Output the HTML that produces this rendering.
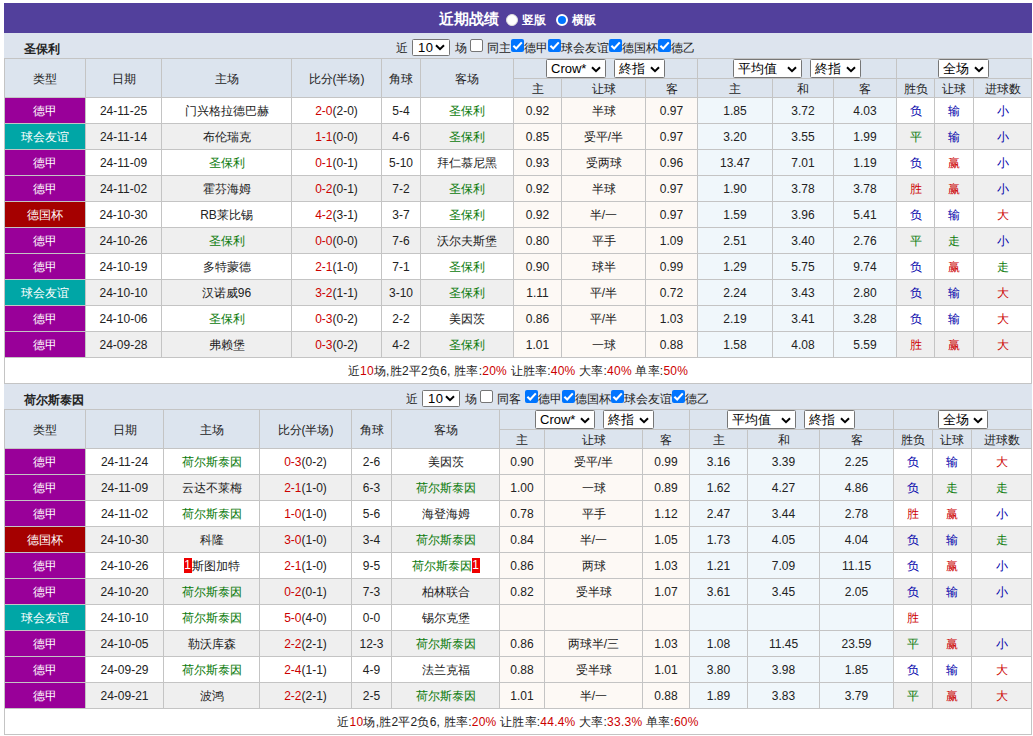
<!DOCTYPE html>
<html><head><meta charset="utf-8"><style>
html,body{margin:0;padding:0;background:#fff;}
body{width:1033px;height:736px;position:relative;overflow:hidden;font-family:"Liberation Sans",sans-serif;font-size:12px;color:#222;}
.c{position:absolute;box-sizing:border-box;text-align:center;white-space:nowrap;overflow:hidden;}
.t{position:absolute;height:25px;line-height:25px;white-space:nowrap;}
.tn{position:absolute;font-weight:bold;white-space:nowrap;}
.title{position:absolute;left:4px;top:3px;width:1028px;height:30px;background:#52409c;color:#fff;}
.tt{position:absolute;left:435px;top:1px;line-height:30px;font-size:15px;font-weight:bold;}
.rad{position:absolute;top:10.5px;width:12px;height:12px;border-radius:50%;box-sizing:border-box;}
.r1{left:501.5px;background:#fff;border:1px solid #ddd;}
.r2{left:552px;background:#0075ff;border:2px solid #fff;}
.rl{position:absolute;top:2px;line-height:31px;font-weight:bold;}
.sel{position:absolute;box-sizing:border-box;border:1px solid #767676;border-radius:1.5px;background:#fff;color:#000;font-size:13px;}
.sel .st{position:absolute;left:4px;top:0;line-height:17px;}
.sel .chev{position:absolute;right:4px;top:6px;}
.s10 .st{top:-1px;left:5px;letter-spacing:0.5px;}
.s10 .chev{top:4px;}
.cbc{position:absolute;width:13px;height:13px;box-sizing:border-box;background:#0075ff;border-radius:2px;}
.cbc svg{position:absolute;left:0;top:0;}
.cbu{position:absolute;width:13px;height:13px;box-sizing:border-box;background:#fff;border:1px solid #767676;border-radius:2px;}
.rc{display:inline-block;position:relative;top:-1px;background:#e00;color:#fff;width:8px;height:15px;line-height:15px;font-size:12px;font-weight:normal;vertical-align:middle;}
</style></head>
<body>
<div class="title"><span class="tt">近期战绩</span><span class="rad r1"></span><span class="rl" style="left:518px">竖版</span><span class="rad r2"></span><span class="rl" style="left:568px">横版</span></div>
<div class="c" style="left:4px;top:33px;width:1028px;height:25px;background:#dde4ee;"></div>
<div class="tn" style="left:24px;top:37px;height:25px;line-height:25px">圣保利</div>
<div class="c" style="left:4px;top:58px;width:82px;height:40px;border:1px solid #c4c4c4;line-height:40px;background:#dce4ee;padding-top:0px">类型</div>
<div class="c" style="left:85px;top:58px;width:77px;height:40px;border:1px solid #c4c4c4;line-height:40px;background:#dce4ee;padding-top:0px">日期</div>
<div class="c" style="left:161px;top:58px;width:131px;height:40px;border:1px solid #c4c4c4;line-height:40px;background:#dce4ee;padding-top:0px">主场</div>
<div class="c" style="left:291px;top:58px;width:91px;height:40px;border:1px solid #c4c4c4;line-height:40px;background:#dce4ee;padding-top:0px">比分(半场)</div>
<div class="c" style="left:381px;top:58px;width:40px;height:40px;border:1px solid #c4c4c4;line-height:40px;background:#dce4ee;padding-top:0px">角球</div>
<div class="c" style="left:420px;top:58px;width:94px;height:40px;border:1px solid #c4c4c4;line-height:40px;background:#dce4ee;padding-top:0px">客场</div>
<div class="c" style="left:513px;top:58px;width:185px;height:21px;border:1px solid #c4c4c4;line-height:21px;background:#dce4ee;"></div>
<div class="c" style="left:697px;top:58px;width:200px;height:21px;border:1px solid #c4c4c4;line-height:21px;background:#dce4ee;"></div>
<div class="c" style="left:896px;top:58px;width:136px;height:21px;border:1px solid #c4c4c4;line-height:21px;background:#dce4ee;"></div>
<div class="c" style="left:513px;top:78px;width:49px;height:20px;border:1px solid #c4c4c4;line-height:20px;background:#dce4ee;">主</div>
<div class="c" style="left:561px;top:78px;width:85px;height:20px;border:1px solid #c4c4c4;line-height:20px;background:#dce4ee;">让球</div>
<div class="c" style="left:645px;top:78px;width:53px;height:20px;border:1px solid #c4c4c4;line-height:20px;background:#dce4ee;">客</div>
<div class="c" style="left:697px;top:78px;width:76px;height:20px;border:1px solid #c4c4c4;line-height:20px;background:#dce4ee;">主</div>
<div class="c" style="left:772px;top:78px;width:62px;height:20px;border:1px solid #c4c4c4;line-height:20px;background:#dce4ee;">和</div>
<div class="c" style="left:833px;top:78px;width:64px;height:20px;border:1px solid #c4c4c4;line-height:20px;background:#dce4ee;">客</div>
<div class="c" style="left:896px;top:78px;width:39px;height:20px;border:1px solid #c4c4c4;line-height:20px;background:#dce4ee;">胜负</div>
<div class="c" style="left:934px;top:78px;width:40px;height:20px;border:1px solid #c4c4c4;line-height:20px;background:#dce4ee;">让球</div>
<div class="c" style="left:973px;top:78px;width:59px;height:20px;border:1px solid #c4c4c4;line-height:20px;background:#dce4ee;">进球数</div>
<div class="c" style="left:4px;top:97px;width:82px;height:27px;border:1px solid #c4c4c4;line-height:27px;background:#990099;color:#fff">德甲</div>
<div class="c" style="left:85px;top:97px;width:77px;height:27px;border:1px solid #c4c4c4;line-height:27px;background:#fff;">24-11-25</div>
<div class="c" style="left:161px;top:97px;width:131px;height:27px;border:1px solid #c4c4c4;line-height:27px;background:#fff;">门兴格拉德巴赫</div>
<div class="c" style="left:291px;top:97px;width:91px;height:27px;border:1px solid #c4c4c4;line-height:27px;background:#fff;"><span style="color:#c00;">2-0</span>(2-0)</div>
<div class="c" style="left:381px;top:97px;width:40px;height:27px;border:1px solid #c4c4c4;line-height:27px;background:#fff;">5-4</div>
<div class="c" style="left:420px;top:97px;width:94px;height:27px;border:1px solid #c4c4c4;line-height:27px;background:#fff;"><span style="color:#0a7a0a;">圣保利</span></div>
<div class="c" style="left:513px;top:97px;width:49px;height:27px;border:1px solid #c4c4c4;line-height:27px;background:#fdf9f5;">0.92</div>
<div class="c" style="left:561px;top:97px;width:85px;height:27px;border:1px solid #c4c4c4;line-height:27px;background:#fdf9f5;">半球</div>
<div class="c" style="left:645px;top:97px;width:53px;height:27px;border:1px solid #c4c4c4;line-height:27px;background:#fdf9f5;">0.97</div>
<div class="c" style="left:697px;top:97px;width:76px;height:27px;border:1px solid #c4c4c4;line-height:27px;background:#f0f7fb;">1.85</div>
<div class="c" style="left:772px;top:97px;width:62px;height:27px;border:1px solid #c4c4c4;line-height:27px;background:#f0f7fb;">3.72</div>
<div class="c" style="left:833px;top:97px;width:64px;height:27px;border:1px solid #c4c4c4;line-height:27px;background:#f0f7fb;">4.03</div>
<div class="c" style="left:896px;top:97px;width:39px;height:27px;border:1px solid #c4c4c4;line-height:27px;background:#fff;"><span style="color:#00a;">负</span></div>
<div class="c" style="left:934px;top:97px;width:40px;height:27px;border:1px solid #c4c4c4;line-height:27px;background:#fff;"><span style="color:#00a;">输</span></div>
<div class="c" style="left:973px;top:97px;width:59px;height:27px;border:1px solid #c4c4c4;line-height:27px;background:#fff;"><span style="color:#00a;">小</span></div>
<div class="c" style="left:4px;top:123px;width:82px;height:27px;border:1px solid #c4c4c4;line-height:27px;background:#00a6a6;color:#fff">球会友谊</div>
<div class="c" style="left:85px;top:123px;width:77px;height:27px;border:1px solid #c4c4c4;line-height:27px;background:#efefef;">24-11-14</div>
<div class="c" style="left:161px;top:123px;width:131px;height:27px;border:1px solid #c4c4c4;line-height:27px;background:#efefef;">布伦瑞克</div>
<div class="c" style="left:291px;top:123px;width:91px;height:27px;border:1px solid #c4c4c4;line-height:27px;background:#efefef;"><span style="color:#c00;">1-1</span>(0-0)</div>
<div class="c" style="left:381px;top:123px;width:40px;height:27px;border:1px solid #c4c4c4;line-height:27px;background:#efefef;">4-6</div>
<div class="c" style="left:420px;top:123px;width:94px;height:27px;border:1px solid #c4c4c4;line-height:27px;background:#efefef;"><span style="color:#0a7a0a;">圣保利</span></div>
<div class="c" style="left:513px;top:123px;width:49px;height:27px;border:1px solid #c4c4c4;line-height:27px;background:#fdf9f5;">0.85</div>
<div class="c" style="left:561px;top:123px;width:85px;height:27px;border:1px solid #c4c4c4;line-height:27px;background:#fdf9f5;">受平/半</div>
<div class="c" style="left:645px;top:123px;width:53px;height:27px;border:1px solid #c4c4c4;line-height:27px;background:#fdf9f5;">0.97</div>
<div class="c" style="left:697px;top:123px;width:76px;height:27px;border:1px solid #c4c4c4;line-height:27px;background:#f0f7fb;">3.20</div>
<div class="c" style="left:772px;top:123px;width:62px;height:27px;border:1px solid #c4c4c4;line-height:27px;background:#f0f7fb;">3.55</div>
<div class="c" style="left:833px;top:123px;width:64px;height:27px;border:1px solid #c4c4c4;line-height:27px;background:#f0f7fb;">1.99</div>
<div class="c" style="left:896px;top:123px;width:39px;height:27px;border:1px solid #c4c4c4;line-height:27px;background:#efefef;"><span style="color:#0a7a0a;">平</span></div>
<div class="c" style="left:934px;top:123px;width:40px;height:27px;border:1px solid #c4c4c4;line-height:27px;background:#efefef;"><span style="color:#00a;">输</span></div>
<div class="c" style="left:973px;top:123px;width:59px;height:27px;border:1px solid #c4c4c4;line-height:27px;background:#efefef;"><span style="color:#00a;">小</span></div>
<div class="c" style="left:4px;top:149px;width:82px;height:27px;border:1px solid #c4c4c4;line-height:27px;background:#990099;color:#fff">德甲</div>
<div class="c" style="left:85px;top:149px;width:77px;height:27px;border:1px solid #c4c4c4;line-height:27px;background:#fff;">24-11-09</div>
<div class="c" style="left:161px;top:149px;width:131px;height:27px;border:1px solid #c4c4c4;line-height:27px;background:#fff;"><span style="color:#0a7a0a;">圣保利</span></div>
<div class="c" style="left:291px;top:149px;width:91px;height:27px;border:1px solid #c4c4c4;line-height:27px;background:#fff;"><span style="color:#c00;">0-1</span>(0-1)</div>
<div class="c" style="left:381px;top:149px;width:40px;height:27px;border:1px solid #c4c4c4;line-height:27px;background:#fff;">5-10</div>
<div class="c" style="left:420px;top:149px;width:94px;height:27px;border:1px solid #c4c4c4;line-height:27px;background:#fff;">拜仁慕尼黑</div>
<div class="c" style="left:513px;top:149px;width:49px;height:27px;border:1px solid #c4c4c4;line-height:27px;background:#fdf9f5;">0.93</div>
<div class="c" style="left:561px;top:149px;width:85px;height:27px;border:1px solid #c4c4c4;line-height:27px;background:#fdf9f5;">受两球</div>
<div class="c" style="left:645px;top:149px;width:53px;height:27px;border:1px solid #c4c4c4;line-height:27px;background:#fdf9f5;">0.96</div>
<div class="c" style="left:697px;top:149px;width:76px;height:27px;border:1px solid #c4c4c4;line-height:27px;background:#f0f7fb;">13.47</div>
<div class="c" style="left:772px;top:149px;width:62px;height:27px;border:1px solid #c4c4c4;line-height:27px;background:#f0f7fb;">7.01</div>
<div class="c" style="left:833px;top:149px;width:64px;height:27px;border:1px solid #c4c4c4;line-height:27px;background:#f0f7fb;">1.19</div>
<div class="c" style="left:896px;top:149px;width:39px;height:27px;border:1px solid #c4c4c4;line-height:27px;background:#fff;"><span style="color:#00a;">负</span></div>
<div class="c" style="left:934px;top:149px;width:40px;height:27px;border:1px solid #c4c4c4;line-height:27px;background:#fff;"><span style="color:#c00;">赢</span></div>
<div class="c" style="left:973px;top:149px;width:59px;height:27px;border:1px solid #c4c4c4;line-height:27px;background:#fff;"><span style="color:#00a;">小</span></div>
<div class="c" style="left:4px;top:175px;width:82px;height:27px;border:1px solid #c4c4c4;line-height:27px;background:#990099;color:#fff">德甲</div>
<div class="c" style="left:85px;top:175px;width:77px;height:27px;border:1px solid #c4c4c4;line-height:27px;background:#efefef;">24-11-02</div>
<div class="c" style="left:161px;top:175px;width:131px;height:27px;border:1px solid #c4c4c4;line-height:27px;background:#efefef;">霍芬海姆</div>
<div class="c" style="left:291px;top:175px;width:91px;height:27px;border:1px solid #c4c4c4;line-height:27px;background:#efefef;"><span style="color:#c00;">0-2</span>(0-1)</div>
<div class="c" style="left:381px;top:175px;width:40px;height:27px;border:1px solid #c4c4c4;line-height:27px;background:#efefef;">7-2</div>
<div class="c" style="left:420px;top:175px;width:94px;height:27px;border:1px solid #c4c4c4;line-height:27px;background:#efefef;"><span style="color:#0a7a0a;">圣保利</span></div>
<div class="c" style="left:513px;top:175px;width:49px;height:27px;border:1px solid #c4c4c4;line-height:27px;background:#fdf9f5;">0.92</div>
<div class="c" style="left:561px;top:175px;width:85px;height:27px;border:1px solid #c4c4c4;line-height:27px;background:#fdf9f5;">半球</div>
<div class="c" style="left:645px;top:175px;width:53px;height:27px;border:1px solid #c4c4c4;line-height:27px;background:#fdf9f5;">0.97</div>
<div class="c" style="left:697px;top:175px;width:76px;height:27px;border:1px solid #c4c4c4;line-height:27px;background:#f0f7fb;">1.90</div>
<div class="c" style="left:772px;top:175px;width:62px;height:27px;border:1px solid #c4c4c4;line-height:27px;background:#f0f7fb;">3.78</div>
<div class="c" style="left:833px;top:175px;width:64px;height:27px;border:1px solid #c4c4c4;line-height:27px;background:#f0f7fb;">3.78</div>
<div class="c" style="left:896px;top:175px;width:39px;height:27px;border:1px solid #c4c4c4;line-height:27px;background:#efefef;"><span style="color:#c00;">胜</span></div>
<div class="c" style="left:934px;top:175px;width:40px;height:27px;border:1px solid #c4c4c4;line-height:27px;background:#efefef;"><span style="color:#c00;">赢</span></div>
<div class="c" style="left:973px;top:175px;width:59px;height:27px;border:1px solid #c4c4c4;line-height:27px;background:#efefef;"><span style="color:#00a;">小</span></div>
<div class="c" style="left:4px;top:201px;width:82px;height:27px;border:1px solid #c4c4c4;line-height:27px;background:#a50000;color:#fff">德国杯</div>
<div class="c" style="left:85px;top:201px;width:77px;height:27px;border:1px solid #c4c4c4;line-height:27px;background:#fff;">24-10-30</div>
<div class="c" style="left:161px;top:201px;width:131px;height:27px;border:1px solid #c4c4c4;line-height:27px;background:#fff;">RB莱比锡</div>
<div class="c" style="left:291px;top:201px;width:91px;height:27px;border:1px solid #c4c4c4;line-height:27px;background:#fff;"><span style="color:#c00;">4-2</span>(3-1)</div>
<div class="c" style="left:381px;top:201px;width:40px;height:27px;border:1px solid #c4c4c4;line-height:27px;background:#fff;">3-7</div>
<div class="c" style="left:420px;top:201px;width:94px;height:27px;border:1px solid #c4c4c4;line-height:27px;background:#fff;"><span style="color:#0a7a0a;">圣保利</span></div>
<div class="c" style="left:513px;top:201px;width:49px;height:27px;border:1px solid #c4c4c4;line-height:27px;background:#fdf9f5;">0.92</div>
<div class="c" style="left:561px;top:201px;width:85px;height:27px;border:1px solid #c4c4c4;line-height:27px;background:#fdf9f5;">半/一</div>
<div class="c" style="left:645px;top:201px;width:53px;height:27px;border:1px solid #c4c4c4;line-height:27px;background:#fdf9f5;">0.97</div>
<div class="c" style="left:697px;top:201px;width:76px;height:27px;border:1px solid #c4c4c4;line-height:27px;background:#f0f7fb;">1.59</div>
<div class="c" style="left:772px;top:201px;width:62px;height:27px;border:1px solid #c4c4c4;line-height:27px;background:#f0f7fb;">3.96</div>
<div class="c" style="left:833px;top:201px;width:64px;height:27px;border:1px solid #c4c4c4;line-height:27px;background:#f0f7fb;">5.41</div>
<div class="c" style="left:896px;top:201px;width:39px;height:27px;border:1px solid #c4c4c4;line-height:27px;background:#fff;"><span style="color:#00a;">负</span></div>
<div class="c" style="left:934px;top:201px;width:40px;height:27px;border:1px solid #c4c4c4;line-height:27px;background:#fff;"><span style="color:#00a;">输</span></div>
<div class="c" style="left:973px;top:201px;width:59px;height:27px;border:1px solid #c4c4c4;line-height:27px;background:#fff;"><span style="color:#c00;">大</span></div>
<div class="c" style="left:4px;top:227px;width:82px;height:27px;border:1px solid #c4c4c4;line-height:27px;background:#990099;color:#fff">德甲</div>
<div class="c" style="left:85px;top:227px;width:77px;height:27px;border:1px solid #c4c4c4;line-height:27px;background:#efefef;">24-10-26</div>
<div class="c" style="left:161px;top:227px;width:131px;height:27px;border:1px solid #c4c4c4;line-height:27px;background:#efefef;"><span style="color:#0a7a0a;">圣保利</span></div>
<div class="c" style="left:291px;top:227px;width:91px;height:27px;border:1px solid #c4c4c4;line-height:27px;background:#efefef;"><span style="color:#c00;">0-0</span>(0-0)</div>
<div class="c" style="left:381px;top:227px;width:40px;height:27px;border:1px solid #c4c4c4;line-height:27px;background:#efefef;">7-6</div>
<div class="c" style="left:420px;top:227px;width:94px;height:27px;border:1px solid #c4c4c4;line-height:27px;background:#efefef;">沃尔夫斯堡</div>
<div class="c" style="left:513px;top:227px;width:49px;height:27px;border:1px solid #c4c4c4;line-height:27px;background:#fdf9f5;">0.80</div>
<div class="c" style="left:561px;top:227px;width:85px;height:27px;border:1px solid #c4c4c4;line-height:27px;background:#fdf9f5;">平手</div>
<div class="c" style="left:645px;top:227px;width:53px;height:27px;border:1px solid #c4c4c4;line-height:27px;background:#fdf9f5;">1.09</div>
<div class="c" style="left:697px;top:227px;width:76px;height:27px;border:1px solid #c4c4c4;line-height:27px;background:#f0f7fb;">2.51</div>
<div class="c" style="left:772px;top:227px;width:62px;height:27px;border:1px solid #c4c4c4;line-height:27px;background:#f0f7fb;">3.40</div>
<div class="c" style="left:833px;top:227px;width:64px;height:27px;border:1px solid #c4c4c4;line-height:27px;background:#f0f7fb;">2.76</div>
<div class="c" style="left:896px;top:227px;width:39px;height:27px;border:1px solid #c4c4c4;line-height:27px;background:#efefef;"><span style="color:#0a7a0a;">平</span></div>
<div class="c" style="left:934px;top:227px;width:40px;height:27px;border:1px solid #c4c4c4;line-height:27px;background:#efefef;"><span style="color:#0a7a0a;">走</span></div>
<div class="c" style="left:973px;top:227px;width:59px;height:27px;border:1px solid #c4c4c4;line-height:27px;background:#efefef;"><span style="color:#00a;">小</span></div>
<div class="c" style="left:4px;top:253px;width:82px;height:27px;border:1px solid #c4c4c4;line-height:27px;background:#990099;color:#fff">德甲</div>
<div class="c" style="left:85px;top:253px;width:77px;height:27px;border:1px solid #c4c4c4;line-height:27px;background:#fff;">24-10-19</div>
<div class="c" style="left:161px;top:253px;width:131px;height:27px;border:1px solid #c4c4c4;line-height:27px;background:#fff;">多特蒙德</div>
<div class="c" style="left:291px;top:253px;width:91px;height:27px;border:1px solid #c4c4c4;line-height:27px;background:#fff;"><span style="color:#c00;">2-1</span>(1-0)</div>
<div class="c" style="left:381px;top:253px;width:40px;height:27px;border:1px solid #c4c4c4;line-height:27px;background:#fff;">7-1</div>
<div class="c" style="left:420px;top:253px;width:94px;height:27px;border:1px solid #c4c4c4;line-height:27px;background:#fff;"><span style="color:#0a7a0a;">圣保利</span></div>
<div class="c" style="left:513px;top:253px;width:49px;height:27px;border:1px solid #c4c4c4;line-height:27px;background:#fdf9f5;">0.90</div>
<div class="c" style="left:561px;top:253px;width:85px;height:27px;border:1px solid #c4c4c4;line-height:27px;background:#fdf9f5;">球半</div>
<div class="c" style="left:645px;top:253px;width:53px;height:27px;border:1px solid #c4c4c4;line-height:27px;background:#fdf9f5;">0.99</div>
<div class="c" style="left:697px;top:253px;width:76px;height:27px;border:1px solid #c4c4c4;line-height:27px;background:#f0f7fb;">1.29</div>
<div class="c" style="left:772px;top:253px;width:62px;height:27px;border:1px solid #c4c4c4;line-height:27px;background:#f0f7fb;">5.75</div>
<div class="c" style="left:833px;top:253px;width:64px;height:27px;border:1px solid #c4c4c4;line-height:27px;background:#f0f7fb;">9.74</div>
<div class="c" style="left:896px;top:253px;width:39px;height:27px;border:1px solid #c4c4c4;line-height:27px;background:#fff;"><span style="color:#00a;">负</span></div>
<div class="c" style="left:934px;top:253px;width:40px;height:27px;border:1px solid #c4c4c4;line-height:27px;background:#fff;"><span style="color:#c00;">赢</span></div>
<div class="c" style="left:973px;top:253px;width:59px;height:27px;border:1px solid #c4c4c4;line-height:27px;background:#fff;"><span style="color:#0a7a0a;">走</span></div>
<div class="c" style="left:4px;top:279px;width:82px;height:27px;border:1px solid #c4c4c4;line-height:27px;background:#00a6a6;color:#fff">球会友谊</div>
<div class="c" style="left:85px;top:279px;width:77px;height:27px;border:1px solid #c4c4c4;line-height:27px;background:#efefef;">24-10-10</div>
<div class="c" style="left:161px;top:279px;width:131px;height:27px;border:1px solid #c4c4c4;line-height:27px;background:#efefef;">汉诺威96</div>
<div class="c" style="left:291px;top:279px;width:91px;height:27px;border:1px solid #c4c4c4;line-height:27px;background:#efefef;"><span style="color:#c00;">3-2</span>(1-1)</div>
<div class="c" style="left:381px;top:279px;width:40px;height:27px;border:1px solid #c4c4c4;line-height:27px;background:#efefef;">3-10</div>
<div class="c" style="left:420px;top:279px;width:94px;height:27px;border:1px solid #c4c4c4;line-height:27px;background:#efefef;"><span style="color:#0a7a0a;">圣保利</span></div>
<div class="c" style="left:513px;top:279px;width:49px;height:27px;border:1px solid #c4c4c4;line-height:27px;background:#fdf9f5;">1.11</div>
<div class="c" style="left:561px;top:279px;width:85px;height:27px;border:1px solid #c4c4c4;line-height:27px;background:#fdf9f5;">平/半</div>
<div class="c" style="left:645px;top:279px;width:53px;height:27px;border:1px solid #c4c4c4;line-height:27px;background:#fdf9f5;">0.72</div>
<div class="c" style="left:697px;top:279px;width:76px;height:27px;border:1px solid #c4c4c4;line-height:27px;background:#f0f7fb;">2.24</div>
<div class="c" style="left:772px;top:279px;width:62px;height:27px;border:1px solid #c4c4c4;line-height:27px;background:#f0f7fb;">3.43</div>
<div class="c" style="left:833px;top:279px;width:64px;height:27px;border:1px solid #c4c4c4;line-height:27px;background:#f0f7fb;">2.80</div>
<div class="c" style="left:896px;top:279px;width:39px;height:27px;border:1px solid #c4c4c4;line-height:27px;background:#efefef;"><span style="color:#00a;">负</span></div>
<div class="c" style="left:934px;top:279px;width:40px;height:27px;border:1px solid #c4c4c4;line-height:27px;background:#efefef;"><span style="color:#00a;">输</span></div>
<div class="c" style="left:973px;top:279px;width:59px;height:27px;border:1px solid #c4c4c4;line-height:27px;background:#efefef;"><span style="color:#c00;">大</span></div>
<div class="c" style="left:4px;top:305px;width:82px;height:27px;border:1px solid #c4c4c4;line-height:27px;background:#990099;color:#fff">德甲</div>
<div class="c" style="left:85px;top:305px;width:77px;height:27px;border:1px solid #c4c4c4;line-height:27px;background:#fff;">24-10-06</div>
<div class="c" style="left:161px;top:305px;width:131px;height:27px;border:1px solid #c4c4c4;line-height:27px;background:#fff;"><span style="color:#0a7a0a;">圣保利</span></div>
<div class="c" style="left:291px;top:305px;width:91px;height:27px;border:1px solid #c4c4c4;line-height:27px;background:#fff;"><span style="color:#c00;">0-3</span>(0-2)</div>
<div class="c" style="left:381px;top:305px;width:40px;height:27px;border:1px solid #c4c4c4;line-height:27px;background:#fff;">2-2</div>
<div class="c" style="left:420px;top:305px;width:94px;height:27px;border:1px solid #c4c4c4;line-height:27px;background:#fff;">美因茨</div>
<div class="c" style="left:513px;top:305px;width:49px;height:27px;border:1px solid #c4c4c4;line-height:27px;background:#fdf9f5;">0.86</div>
<div class="c" style="left:561px;top:305px;width:85px;height:27px;border:1px solid #c4c4c4;line-height:27px;background:#fdf9f5;">平/半</div>
<div class="c" style="left:645px;top:305px;width:53px;height:27px;border:1px solid #c4c4c4;line-height:27px;background:#fdf9f5;">1.03</div>
<div class="c" style="left:697px;top:305px;width:76px;height:27px;border:1px solid #c4c4c4;line-height:27px;background:#f0f7fb;">2.19</div>
<div class="c" style="left:772px;top:305px;width:62px;height:27px;border:1px solid #c4c4c4;line-height:27px;background:#f0f7fb;">3.41</div>
<div class="c" style="left:833px;top:305px;width:64px;height:27px;border:1px solid #c4c4c4;line-height:27px;background:#f0f7fb;">3.28</div>
<div class="c" style="left:896px;top:305px;width:39px;height:27px;border:1px solid #c4c4c4;line-height:27px;background:#fff;"><span style="color:#00a;">负</span></div>
<div class="c" style="left:934px;top:305px;width:40px;height:27px;border:1px solid #c4c4c4;line-height:27px;background:#fff;"><span style="color:#00a;">输</span></div>
<div class="c" style="left:973px;top:305px;width:59px;height:27px;border:1px solid #c4c4c4;line-height:27px;background:#fff;"><span style="color:#c00;">大</span></div>
<div class="c" style="left:4px;top:331px;width:82px;height:27px;border:1px solid #c4c4c4;line-height:27px;background:#990099;color:#fff">德甲</div>
<div class="c" style="left:85px;top:331px;width:77px;height:27px;border:1px solid #c4c4c4;line-height:27px;background:#efefef;">24-09-28</div>
<div class="c" style="left:161px;top:331px;width:131px;height:27px;border:1px solid #c4c4c4;line-height:27px;background:#efefef;">弗赖堡</div>
<div class="c" style="left:291px;top:331px;width:91px;height:27px;border:1px solid #c4c4c4;line-height:27px;background:#efefef;"><span style="color:#c00;">0-3</span>(0-2)</div>
<div class="c" style="left:381px;top:331px;width:40px;height:27px;border:1px solid #c4c4c4;line-height:27px;background:#efefef;">4-2</div>
<div class="c" style="left:420px;top:331px;width:94px;height:27px;border:1px solid #c4c4c4;line-height:27px;background:#efefef;"><span style="color:#0a7a0a;">圣保利</span></div>
<div class="c" style="left:513px;top:331px;width:49px;height:27px;border:1px solid #c4c4c4;line-height:27px;background:#fdf9f5;">1.01</div>
<div class="c" style="left:561px;top:331px;width:85px;height:27px;border:1px solid #c4c4c4;line-height:27px;background:#fdf9f5;">一球</div>
<div class="c" style="left:645px;top:331px;width:53px;height:27px;border:1px solid #c4c4c4;line-height:27px;background:#fdf9f5;">0.88</div>
<div class="c" style="left:697px;top:331px;width:76px;height:27px;border:1px solid #c4c4c4;line-height:27px;background:#f0f7fb;">1.58</div>
<div class="c" style="left:772px;top:331px;width:62px;height:27px;border:1px solid #c4c4c4;line-height:27px;background:#f0f7fb;">4.08</div>
<div class="c" style="left:833px;top:331px;width:64px;height:27px;border:1px solid #c4c4c4;line-height:27px;background:#f0f7fb;">5.59</div>
<div class="c" style="left:896px;top:331px;width:39px;height:27px;border:1px solid #c4c4c4;line-height:27px;background:#efefef;"><span style="color:#c00;">胜</span></div>
<div class="c" style="left:934px;top:331px;width:40px;height:27px;border:1px solid #c4c4c4;line-height:27px;background:#efefef;"><span style="color:#c00;">赢</span></div>
<div class="c" style="left:973px;top:331px;width:59px;height:27px;border:1px solid #c4c4c4;line-height:27px;background:#efefef;"><span style="color:#c00;">大</span></div>
<div class="c" style="left:4px;top:357px;width:1028px;height:27px;border:1px solid #c4c4c4;line-height:27px;background:#fff;letter-spacing:0.23px">近<span style="color:#c00;">10</span>场,胜2平2负6, 胜率:<span style="color:#c00;">20%</span> 让胜率:<span style="color:#c00;">40%</span> 大率:<span style="color:#c00;">40%</span> 单率:<span style="color:#c00;">50%</span></div>
<div class="t" style="left:396px;top:36px;">近</div>
<div class="sel s10" style="left:412px;top:39px;width:38px;height:17px"><span class="st">10</span><svg class="chev" width="10" height="7" viewBox="0 0 10 7"><path d="M1 1.2 L5 5.2 L9 1.2" fill="none" stroke="#000" stroke-width="2"/></svg></div>
<div class="t" style="left:455px;top:36px;">场</div>
<div class="cbu" style="left:470px;top:39px"></div>
<div class="t" style="left:487px;top:36px;">同主</div>
<div class="cbc" style="left:511px;top:39px"><svg width="13" height="13" viewBox="0 0 13 13"><path d="M2.4 6.7 L5.2 9.4 L10.8 3.4" fill="none" stroke="#fff" stroke-width="2.1"/></svg></div>
<div class="t" style="left:524px;top:36px;">德甲</div>
<div class="cbc" style="left:548px;top:39px"><svg width="13" height="13" viewBox="0 0 13 13"><path d="M2.4 6.7 L5.2 9.4 L10.8 3.4" fill="none" stroke="#fff" stroke-width="2.1"/></svg></div>
<div class="t" style="left:561px;top:36px;">球会友谊</div>
<div class="cbc" style="left:609px;top:39px"><svg width="13" height="13" viewBox="0 0 13 13"><path d="M2.4 6.7 L5.2 9.4 L10.8 3.4" fill="none" stroke="#fff" stroke-width="2.1"/></svg></div>
<div class="t" style="left:622px;top:36px;">德国杯</div>
<div class="cbc" style="left:658px;top:39px"><svg width="13" height="13" viewBox="0 0 13 13"><path d="M2.4 6.7 L5.2 9.4 L10.8 3.4" fill="none" stroke="#fff" stroke-width="2.1"/></svg></div>
<div class="t" style="left:671px;top:36px;">德乙</div>
<div class="sel" style="left:546px;top:59px;width:60px;height:19px"><span class="st">Crow*</span><svg class="chev" width="10" height="7" viewBox="0 0 10 7"><path d="M1 1.2 L5 5.2 L9 1.2" fill="none" stroke="#000" stroke-width="2"/></svg></div>
<div class="sel" style="left:614px;top:59px;width:51px;height:19px"><span class="st">終指</span><svg class="chev" width="10" height="7" viewBox="0 0 10 7"><path d="M1 1.2 L5 5.2 L9 1.2" fill="none" stroke="#000" stroke-width="2"/></svg></div>
<div class="sel" style="left:733px;top:59px;width:69px;height:19px"><span class="st">平均值</span><svg class="chev" width="10" height="7" viewBox="0 0 10 7"><path d="M1 1.2 L5 5.2 L9 1.2" fill="none" stroke="#000" stroke-width="2"/></svg></div>
<div class="sel" style="left:810px;top:59px;width:51px;height:19px"><span class="st">終指</span><svg class="chev" width="10" height="7" viewBox="0 0 10 7"><path d="M1 1.2 L5 5.2 L9 1.2" fill="none" stroke="#000" stroke-width="2"/></svg></div>
<div class="sel" style="left:938px;top:59px;width:51px;height:19px"><span class="st">全场</span><svg class="chev" width="10" height="7" viewBox="0 0 10 7"><path d="M1 1.2 L5 5.2 L9 1.2" fill="none" stroke="#000" stroke-width="2"/></svg></div>
<div class="c" style="left:4px;top:384px;width:1028px;height:25px;background:#dde4ee;"></div>
<div class="tn" style="left:24px;top:388px;height:25px;line-height:25px">荷尔斯泰因</div>
<div class="c" style="left:4px;top:409px;width:82px;height:40px;border:1px solid #c4c4c4;line-height:40px;background:#dce4ee;padding-top:0px">类型</div>
<div class="c" style="left:85px;top:409px;width:79px;height:40px;border:1px solid #c4c4c4;line-height:40px;background:#dce4ee;padding-top:0px">日期</div>
<div class="c" style="left:163px;top:409px;width:97px;height:40px;border:1px solid #c4c4c4;line-height:40px;background:#dce4ee;padding-top:0px">主场</div>
<div class="c" style="left:259px;top:409px;width:93px;height:40px;border:1px solid #c4c4c4;line-height:40px;background:#dce4ee;padding-top:0px">比分(半场)</div>
<div class="c" style="left:351px;top:409px;width:41px;height:40px;border:1px solid #c4c4c4;line-height:40px;background:#dce4ee;padding-top:0px">角球</div>
<div class="c" style="left:391px;top:409px;width:109px;height:40px;border:1px solid #c4c4c4;line-height:40px;background:#dce4ee;padding-top:0px">客场</div>
<div class="c" style="left:499px;top:409px;width:191px;height:21px;border:1px solid #c4c4c4;line-height:21px;background:#dce4ee;"></div>
<div class="c" style="left:689px;top:409px;width:205px;height:21px;border:1px solid #c4c4c4;line-height:21px;background:#dce4ee;"></div>
<div class="c" style="left:893px;top:409px;width:139px;height:21px;border:1px solid #c4c4c4;line-height:21px;background:#dce4ee;"></div>
<div class="c" style="left:499px;top:429px;width:46px;height:20px;border:1px solid #c4c4c4;line-height:20px;background:#dce4ee;">主</div>
<div class="c" style="left:544px;top:429px;width:99px;height:20px;border:1px solid #c4c4c4;line-height:20px;background:#dce4ee;">让球</div>
<div class="c" style="left:642px;top:429px;width:48px;height:20px;border:1px solid #c4c4c4;line-height:20px;background:#dce4ee;">客</div>
<div class="c" style="left:689px;top:429px;width:59px;height:20px;border:1px solid #c4c4c4;line-height:20px;background:#dce4ee;">主</div>
<div class="c" style="left:747px;top:429px;width:73px;height:20px;border:1px solid #c4c4c4;line-height:20px;background:#dce4ee;">和</div>
<div class="c" style="left:819px;top:429px;width:75px;height:20px;border:1px solid #c4c4c4;line-height:20px;background:#dce4ee;">客</div>
<div class="c" style="left:893px;top:429px;width:40px;height:20px;border:1px solid #c4c4c4;line-height:20px;background:#dce4ee;">胜负</div>
<div class="c" style="left:932px;top:429px;width:40px;height:20px;border:1px solid #c4c4c4;line-height:20px;background:#dce4ee;">让球</div>
<div class="c" style="left:971px;top:429px;width:61px;height:20px;border:1px solid #c4c4c4;line-height:20px;background:#dce4ee;">进球数</div>
<div class="c" style="left:4px;top:448px;width:82px;height:27px;border:1px solid #c4c4c4;line-height:27px;background:#990099;color:#fff">德甲</div>
<div class="c" style="left:85px;top:448px;width:79px;height:27px;border:1px solid #c4c4c4;line-height:27px;background:#fff;">24-11-24</div>
<div class="c" style="left:163px;top:448px;width:97px;height:27px;border:1px solid #c4c4c4;line-height:27px;background:#fff;"><span style="color:#0a7a0a;">荷尔斯泰因</span></div>
<div class="c" style="left:259px;top:448px;width:93px;height:27px;border:1px solid #c4c4c4;line-height:27px;background:#fff;"><span style="color:#c00;">0-3</span>(0-2)</div>
<div class="c" style="left:351px;top:448px;width:41px;height:27px;border:1px solid #c4c4c4;line-height:27px;background:#fff;">2-6</div>
<div class="c" style="left:391px;top:448px;width:109px;height:27px;border:1px solid #c4c4c4;line-height:27px;background:#fff;">美因茨</div>
<div class="c" style="left:499px;top:448px;width:46px;height:27px;border:1px solid #c4c4c4;line-height:27px;background:#fdf9f5;">0.90</div>
<div class="c" style="left:544px;top:448px;width:99px;height:27px;border:1px solid #c4c4c4;line-height:27px;background:#fdf9f5;">受平/半</div>
<div class="c" style="left:642px;top:448px;width:48px;height:27px;border:1px solid #c4c4c4;line-height:27px;background:#fdf9f5;">0.99</div>
<div class="c" style="left:689px;top:448px;width:59px;height:27px;border:1px solid #c4c4c4;line-height:27px;background:#f0f7fb;">3.16</div>
<div class="c" style="left:747px;top:448px;width:73px;height:27px;border:1px solid #c4c4c4;line-height:27px;background:#f0f7fb;">3.39</div>
<div class="c" style="left:819px;top:448px;width:75px;height:27px;border:1px solid #c4c4c4;line-height:27px;background:#f0f7fb;">2.25</div>
<div class="c" style="left:893px;top:448px;width:40px;height:27px;border:1px solid #c4c4c4;line-height:27px;background:#fff;"><span style="color:#00a;">负</span></div>
<div class="c" style="left:932px;top:448px;width:40px;height:27px;border:1px solid #c4c4c4;line-height:27px;background:#fff;"><span style="color:#00a;">输</span></div>
<div class="c" style="left:971px;top:448px;width:61px;height:27px;border:1px solid #c4c4c4;line-height:27px;background:#fff;"><span style="color:#c00;">大</span></div>
<div class="c" style="left:4px;top:474px;width:82px;height:27px;border:1px solid #c4c4c4;line-height:27px;background:#990099;color:#fff">德甲</div>
<div class="c" style="left:85px;top:474px;width:79px;height:27px;border:1px solid #c4c4c4;line-height:27px;background:#efefef;">24-11-09</div>
<div class="c" style="left:163px;top:474px;width:97px;height:27px;border:1px solid #c4c4c4;line-height:27px;background:#efefef;">云达不莱梅</div>
<div class="c" style="left:259px;top:474px;width:93px;height:27px;border:1px solid #c4c4c4;line-height:27px;background:#efefef;"><span style="color:#c00;">2-1</span>(1-0)</div>
<div class="c" style="left:351px;top:474px;width:41px;height:27px;border:1px solid #c4c4c4;line-height:27px;background:#efefef;">6-3</div>
<div class="c" style="left:391px;top:474px;width:109px;height:27px;border:1px solid #c4c4c4;line-height:27px;background:#efefef;"><span style="color:#0a7a0a;">荷尔斯泰因</span></div>
<div class="c" style="left:499px;top:474px;width:46px;height:27px;border:1px solid #c4c4c4;line-height:27px;background:#fdf9f5;">1.00</div>
<div class="c" style="left:544px;top:474px;width:99px;height:27px;border:1px solid #c4c4c4;line-height:27px;background:#fdf9f5;">一球</div>
<div class="c" style="left:642px;top:474px;width:48px;height:27px;border:1px solid #c4c4c4;line-height:27px;background:#fdf9f5;">0.89</div>
<div class="c" style="left:689px;top:474px;width:59px;height:27px;border:1px solid #c4c4c4;line-height:27px;background:#f0f7fb;">1.62</div>
<div class="c" style="left:747px;top:474px;width:73px;height:27px;border:1px solid #c4c4c4;line-height:27px;background:#f0f7fb;">4.27</div>
<div class="c" style="left:819px;top:474px;width:75px;height:27px;border:1px solid #c4c4c4;line-height:27px;background:#f0f7fb;">4.86</div>
<div class="c" style="left:893px;top:474px;width:40px;height:27px;border:1px solid #c4c4c4;line-height:27px;background:#efefef;"><span style="color:#00a;">负</span></div>
<div class="c" style="left:932px;top:474px;width:40px;height:27px;border:1px solid #c4c4c4;line-height:27px;background:#efefef;"><span style="color:#0a7a0a;">走</span></div>
<div class="c" style="left:971px;top:474px;width:61px;height:27px;border:1px solid #c4c4c4;line-height:27px;background:#efefef;"><span style="color:#0a7a0a;">走</span></div>
<div class="c" style="left:4px;top:500px;width:82px;height:27px;border:1px solid #c4c4c4;line-height:27px;background:#990099;color:#fff">德甲</div>
<div class="c" style="left:85px;top:500px;width:79px;height:27px;border:1px solid #c4c4c4;line-height:27px;background:#fff;">24-11-02</div>
<div class="c" style="left:163px;top:500px;width:97px;height:27px;border:1px solid #c4c4c4;line-height:27px;background:#fff;"><span style="color:#0a7a0a;">荷尔斯泰因</span></div>
<div class="c" style="left:259px;top:500px;width:93px;height:27px;border:1px solid #c4c4c4;line-height:27px;background:#fff;"><span style="color:#c00;">1-0</span>(1-0)</div>
<div class="c" style="left:351px;top:500px;width:41px;height:27px;border:1px solid #c4c4c4;line-height:27px;background:#fff;">5-6</div>
<div class="c" style="left:391px;top:500px;width:109px;height:27px;border:1px solid #c4c4c4;line-height:27px;background:#fff;">海登海姆</div>
<div class="c" style="left:499px;top:500px;width:46px;height:27px;border:1px solid #c4c4c4;line-height:27px;background:#fdf9f5;">0.78</div>
<div class="c" style="left:544px;top:500px;width:99px;height:27px;border:1px solid #c4c4c4;line-height:27px;background:#fdf9f5;">平手</div>
<div class="c" style="left:642px;top:500px;width:48px;height:27px;border:1px solid #c4c4c4;line-height:27px;background:#fdf9f5;">1.12</div>
<div class="c" style="left:689px;top:500px;width:59px;height:27px;border:1px solid #c4c4c4;line-height:27px;background:#f0f7fb;">2.47</div>
<div class="c" style="left:747px;top:500px;width:73px;height:27px;border:1px solid #c4c4c4;line-height:27px;background:#f0f7fb;">3.44</div>
<div class="c" style="left:819px;top:500px;width:75px;height:27px;border:1px solid #c4c4c4;line-height:27px;background:#f0f7fb;">2.78</div>
<div class="c" style="left:893px;top:500px;width:40px;height:27px;border:1px solid #c4c4c4;line-height:27px;background:#fff;"><span style="color:#c00;">胜</span></div>
<div class="c" style="left:932px;top:500px;width:40px;height:27px;border:1px solid #c4c4c4;line-height:27px;background:#fff;"><span style="color:#c00;">赢</span></div>
<div class="c" style="left:971px;top:500px;width:61px;height:27px;border:1px solid #c4c4c4;line-height:27px;background:#fff;"><span style="color:#00a;">小</span></div>
<div class="c" style="left:4px;top:526px;width:82px;height:27px;border:1px solid #c4c4c4;line-height:27px;background:#a50000;color:#fff">德国杯</div>
<div class="c" style="left:85px;top:526px;width:79px;height:27px;border:1px solid #c4c4c4;line-height:27px;background:#efefef;">24-10-30</div>
<div class="c" style="left:163px;top:526px;width:97px;height:27px;border:1px solid #c4c4c4;line-height:27px;background:#efefef;">科隆</div>
<div class="c" style="left:259px;top:526px;width:93px;height:27px;border:1px solid #c4c4c4;line-height:27px;background:#efefef;"><span style="color:#c00;">3-0</span>(1-0)</div>
<div class="c" style="left:351px;top:526px;width:41px;height:27px;border:1px solid #c4c4c4;line-height:27px;background:#efefef;">3-4</div>
<div class="c" style="left:391px;top:526px;width:109px;height:27px;border:1px solid #c4c4c4;line-height:27px;background:#efefef;"><span style="color:#0a7a0a;">荷尔斯泰因</span></div>
<div class="c" style="left:499px;top:526px;width:46px;height:27px;border:1px solid #c4c4c4;line-height:27px;background:#fdf9f5;">0.84</div>
<div class="c" style="left:544px;top:526px;width:99px;height:27px;border:1px solid #c4c4c4;line-height:27px;background:#fdf9f5;">半/一</div>
<div class="c" style="left:642px;top:526px;width:48px;height:27px;border:1px solid #c4c4c4;line-height:27px;background:#fdf9f5;">1.05</div>
<div class="c" style="left:689px;top:526px;width:59px;height:27px;border:1px solid #c4c4c4;line-height:27px;background:#f0f7fb;">1.73</div>
<div class="c" style="left:747px;top:526px;width:73px;height:27px;border:1px solid #c4c4c4;line-height:27px;background:#f0f7fb;">4.05</div>
<div class="c" style="left:819px;top:526px;width:75px;height:27px;border:1px solid #c4c4c4;line-height:27px;background:#f0f7fb;">4.04</div>
<div class="c" style="left:893px;top:526px;width:40px;height:27px;border:1px solid #c4c4c4;line-height:27px;background:#efefef;"><span style="color:#00a;">负</span></div>
<div class="c" style="left:932px;top:526px;width:40px;height:27px;border:1px solid #c4c4c4;line-height:27px;background:#efefef;"><span style="color:#00a;">输</span></div>
<div class="c" style="left:971px;top:526px;width:61px;height:27px;border:1px solid #c4c4c4;line-height:27px;background:#efefef;"><span style="color:#0a7a0a;">走</span></div>
<div class="c" style="left:4px;top:552px;width:82px;height:27px;border:1px solid #c4c4c4;line-height:27px;background:#990099;color:#fff">德甲</div>
<div class="c" style="left:85px;top:552px;width:79px;height:27px;border:1px solid #c4c4c4;line-height:27px;background:#fff;">24-10-26</div>
<div class="c" style="left:163px;top:552px;width:97px;height:27px;border:1px solid #c4c4c4;line-height:27px;background:#fff;"><b class="rc">1</b>斯图加特</div>
<div class="c" style="left:259px;top:552px;width:93px;height:27px;border:1px solid #c4c4c4;line-height:27px;background:#fff;"><span style="color:#c00;">2-1</span>(1-0)</div>
<div class="c" style="left:351px;top:552px;width:41px;height:27px;border:1px solid #c4c4c4;line-height:27px;background:#fff;">9-5</div>
<div class="c" style="left:391px;top:552px;width:109px;height:27px;border:1px solid #c4c4c4;line-height:27px;background:#fff;"><span style="color:#0a7a0a;">荷尔斯泰因</span><b class="rc">1</b></div>
<div class="c" style="left:499px;top:552px;width:46px;height:27px;border:1px solid #c4c4c4;line-height:27px;background:#fdf9f5;">0.86</div>
<div class="c" style="left:544px;top:552px;width:99px;height:27px;border:1px solid #c4c4c4;line-height:27px;background:#fdf9f5;">两球</div>
<div class="c" style="left:642px;top:552px;width:48px;height:27px;border:1px solid #c4c4c4;line-height:27px;background:#fdf9f5;">1.03</div>
<div class="c" style="left:689px;top:552px;width:59px;height:27px;border:1px solid #c4c4c4;line-height:27px;background:#f0f7fb;">1.21</div>
<div class="c" style="left:747px;top:552px;width:73px;height:27px;border:1px solid #c4c4c4;line-height:27px;background:#f0f7fb;">7.09</div>
<div class="c" style="left:819px;top:552px;width:75px;height:27px;border:1px solid #c4c4c4;line-height:27px;background:#f0f7fb;">11.15</div>
<div class="c" style="left:893px;top:552px;width:40px;height:27px;border:1px solid #c4c4c4;line-height:27px;background:#fff;"><span style="color:#00a;">负</span></div>
<div class="c" style="left:932px;top:552px;width:40px;height:27px;border:1px solid #c4c4c4;line-height:27px;background:#fff;"><span style="color:#c00;">赢</span></div>
<div class="c" style="left:971px;top:552px;width:61px;height:27px;border:1px solid #c4c4c4;line-height:27px;background:#fff;"><span style="color:#00a;">小</span></div>
<div class="c" style="left:4px;top:578px;width:82px;height:27px;border:1px solid #c4c4c4;line-height:27px;background:#990099;color:#fff">德甲</div>
<div class="c" style="left:85px;top:578px;width:79px;height:27px;border:1px solid #c4c4c4;line-height:27px;background:#efefef;">24-10-20</div>
<div class="c" style="left:163px;top:578px;width:97px;height:27px;border:1px solid #c4c4c4;line-height:27px;background:#efefef;"><span style="color:#0a7a0a;">荷尔斯泰因</span></div>
<div class="c" style="left:259px;top:578px;width:93px;height:27px;border:1px solid #c4c4c4;line-height:27px;background:#efefef;"><span style="color:#c00;">0-2</span>(0-1)</div>
<div class="c" style="left:351px;top:578px;width:41px;height:27px;border:1px solid #c4c4c4;line-height:27px;background:#efefef;">7-3</div>
<div class="c" style="left:391px;top:578px;width:109px;height:27px;border:1px solid #c4c4c4;line-height:27px;background:#efefef;">柏林联合</div>
<div class="c" style="left:499px;top:578px;width:46px;height:27px;border:1px solid #c4c4c4;line-height:27px;background:#fdf9f5;">0.82</div>
<div class="c" style="left:544px;top:578px;width:99px;height:27px;border:1px solid #c4c4c4;line-height:27px;background:#fdf9f5;">受半球</div>
<div class="c" style="left:642px;top:578px;width:48px;height:27px;border:1px solid #c4c4c4;line-height:27px;background:#fdf9f5;">1.07</div>
<div class="c" style="left:689px;top:578px;width:59px;height:27px;border:1px solid #c4c4c4;line-height:27px;background:#f0f7fb;">3.61</div>
<div class="c" style="left:747px;top:578px;width:73px;height:27px;border:1px solid #c4c4c4;line-height:27px;background:#f0f7fb;">3.45</div>
<div class="c" style="left:819px;top:578px;width:75px;height:27px;border:1px solid #c4c4c4;line-height:27px;background:#f0f7fb;">2.05</div>
<div class="c" style="left:893px;top:578px;width:40px;height:27px;border:1px solid #c4c4c4;line-height:27px;background:#efefef;"><span style="color:#00a;">负</span></div>
<div class="c" style="left:932px;top:578px;width:40px;height:27px;border:1px solid #c4c4c4;line-height:27px;background:#efefef;"><span style="color:#00a;">输</span></div>
<div class="c" style="left:971px;top:578px;width:61px;height:27px;border:1px solid #c4c4c4;line-height:27px;background:#efefef;"><span style="color:#00a;">小</span></div>
<div class="c" style="left:4px;top:604px;width:82px;height:27px;border:1px solid #c4c4c4;line-height:27px;background:#00a6a6;color:#fff">球会友谊</div>
<div class="c" style="left:85px;top:604px;width:79px;height:27px;border:1px solid #c4c4c4;line-height:27px;background:#fff;">24-10-10</div>
<div class="c" style="left:163px;top:604px;width:97px;height:27px;border:1px solid #c4c4c4;line-height:27px;background:#fff;"><span style="color:#0a7a0a;">荷尔斯泰因</span></div>
<div class="c" style="left:259px;top:604px;width:93px;height:27px;border:1px solid #c4c4c4;line-height:27px;background:#fff;"><span style="color:#c00;">5-0</span>(4-0)</div>
<div class="c" style="left:351px;top:604px;width:41px;height:27px;border:1px solid #c4c4c4;line-height:27px;background:#fff;">0-0</div>
<div class="c" style="left:391px;top:604px;width:109px;height:27px;border:1px solid #c4c4c4;line-height:27px;background:#fff;">锡尔克堡</div>
<div class="c" style="left:499px;top:604px;width:46px;height:27px;border:1px solid #c4c4c4;line-height:27px;background:#fdf9f5;"></div>
<div class="c" style="left:544px;top:604px;width:99px;height:27px;border:1px solid #c4c4c4;line-height:27px;background:#fdf9f5;"></div>
<div class="c" style="left:642px;top:604px;width:48px;height:27px;border:1px solid #c4c4c4;line-height:27px;background:#fdf9f5;"></div>
<div class="c" style="left:689px;top:604px;width:59px;height:27px;border:1px solid #c4c4c4;line-height:27px;background:#f0f7fb;"></div>
<div class="c" style="left:747px;top:604px;width:73px;height:27px;border:1px solid #c4c4c4;line-height:27px;background:#f0f7fb;"></div>
<div class="c" style="left:819px;top:604px;width:75px;height:27px;border:1px solid #c4c4c4;line-height:27px;background:#f0f7fb;"></div>
<div class="c" style="left:893px;top:604px;width:40px;height:27px;border:1px solid #c4c4c4;line-height:27px;background:#fff;"><span style="color:#c00;">胜</span></div>
<div class="c" style="left:932px;top:604px;width:40px;height:27px;border:1px solid #c4c4c4;line-height:27px;background:#fff;"></div>
<div class="c" style="left:971px;top:604px;width:61px;height:27px;border:1px solid #c4c4c4;line-height:27px;background:#fff;"></div>
<div class="c" style="left:4px;top:630px;width:82px;height:27px;border:1px solid #c4c4c4;line-height:27px;background:#990099;color:#fff">德甲</div>
<div class="c" style="left:85px;top:630px;width:79px;height:27px;border:1px solid #c4c4c4;line-height:27px;background:#efefef;">24-10-05</div>
<div class="c" style="left:163px;top:630px;width:97px;height:27px;border:1px solid #c4c4c4;line-height:27px;background:#efefef;">勒沃库森</div>
<div class="c" style="left:259px;top:630px;width:93px;height:27px;border:1px solid #c4c4c4;line-height:27px;background:#efefef;"><span style="color:#c00;">2-2</span>(2-1)</div>
<div class="c" style="left:351px;top:630px;width:41px;height:27px;border:1px solid #c4c4c4;line-height:27px;background:#efefef;">12-3</div>
<div class="c" style="left:391px;top:630px;width:109px;height:27px;border:1px solid #c4c4c4;line-height:27px;background:#efefef;"><span style="color:#0a7a0a;">荷尔斯泰因</span></div>
<div class="c" style="left:499px;top:630px;width:46px;height:27px;border:1px solid #c4c4c4;line-height:27px;background:#fdf9f5;">0.86</div>
<div class="c" style="left:544px;top:630px;width:99px;height:27px;border:1px solid #c4c4c4;line-height:27px;background:#fdf9f5;">两球半/三</div>
<div class="c" style="left:642px;top:630px;width:48px;height:27px;border:1px solid #c4c4c4;line-height:27px;background:#fdf9f5;">1.03</div>
<div class="c" style="left:689px;top:630px;width:59px;height:27px;border:1px solid #c4c4c4;line-height:27px;background:#f0f7fb;">1.08</div>
<div class="c" style="left:747px;top:630px;width:73px;height:27px;border:1px solid #c4c4c4;line-height:27px;background:#f0f7fb;">11.45</div>
<div class="c" style="left:819px;top:630px;width:75px;height:27px;border:1px solid #c4c4c4;line-height:27px;background:#f0f7fb;">23.59</div>
<div class="c" style="left:893px;top:630px;width:40px;height:27px;border:1px solid #c4c4c4;line-height:27px;background:#efefef;"><span style="color:#0a7a0a;">平</span></div>
<div class="c" style="left:932px;top:630px;width:40px;height:27px;border:1px solid #c4c4c4;line-height:27px;background:#efefef;"><span style="color:#c00;">赢</span></div>
<div class="c" style="left:971px;top:630px;width:61px;height:27px;border:1px solid #c4c4c4;line-height:27px;background:#efefef;"><span style="color:#00a;">小</span></div>
<div class="c" style="left:4px;top:656px;width:82px;height:27px;border:1px solid #c4c4c4;line-height:27px;background:#990099;color:#fff">德甲</div>
<div class="c" style="left:85px;top:656px;width:79px;height:27px;border:1px solid #c4c4c4;line-height:27px;background:#fff;">24-09-29</div>
<div class="c" style="left:163px;top:656px;width:97px;height:27px;border:1px solid #c4c4c4;line-height:27px;background:#fff;"><span style="color:#0a7a0a;">荷尔斯泰因</span></div>
<div class="c" style="left:259px;top:656px;width:93px;height:27px;border:1px solid #c4c4c4;line-height:27px;background:#fff;"><span style="color:#c00;">2-4</span>(1-1)</div>
<div class="c" style="left:351px;top:656px;width:41px;height:27px;border:1px solid #c4c4c4;line-height:27px;background:#fff;">4-9</div>
<div class="c" style="left:391px;top:656px;width:109px;height:27px;border:1px solid #c4c4c4;line-height:27px;background:#fff;">法兰克福</div>
<div class="c" style="left:499px;top:656px;width:46px;height:27px;border:1px solid #c4c4c4;line-height:27px;background:#fdf9f5;">0.88</div>
<div class="c" style="left:544px;top:656px;width:99px;height:27px;border:1px solid #c4c4c4;line-height:27px;background:#fdf9f5;">受半球</div>
<div class="c" style="left:642px;top:656px;width:48px;height:27px;border:1px solid #c4c4c4;line-height:27px;background:#fdf9f5;">1.01</div>
<div class="c" style="left:689px;top:656px;width:59px;height:27px;border:1px solid #c4c4c4;line-height:27px;background:#f0f7fb;">3.80</div>
<div class="c" style="left:747px;top:656px;width:73px;height:27px;border:1px solid #c4c4c4;line-height:27px;background:#f0f7fb;">3.98</div>
<div class="c" style="left:819px;top:656px;width:75px;height:27px;border:1px solid #c4c4c4;line-height:27px;background:#f0f7fb;">1.85</div>
<div class="c" style="left:893px;top:656px;width:40px;height:27px;border:1px solid #c4c4c4;line-height:27px;background:#fff;"><span style="color:#00a;">负</span></div>
<div class="c" style="left:932px;top:656px;width:40px;height:27px;border:1px solid #c4c4c4;line-height:27px;background:#fff;"><span style="color:#00a;">输</span></div>
<div class="c" style="left:971px;top:656px;width:61px;height:27px;border:1px solid #c4c4c4;line-height:27px;background:#fff;"><span style="color:#c00;">大</span></div>
<div class="c" style="left:4px;top:682px;width:82px;height:27px;border:1px solid #c4c4c4;line-height:27px;background:#990099;color:#fff">德甲</div>
<div class="c" style="left:85px;top:682px;width:79px;height:27px;border:1px solid #c4c4c4;line-height:27px;background:#efefef;">24-09-21</div>
<div class="c" style="left:163px;top:682px;width:97px;height:27px;border:1px solid #c4c4c4;line-height:27px;background:#efefef;">波鸿</div>
<div class="c" style="left:259px;top:682px;width:93px;height:27px;border:1px solid #c4c4c4;line-height:27px;background:#efefef;"><span style="color:#c00;">2-2</span>(2-1)</div>
<div class="c" style="left:351px;top:682px;width:41px;height:27px;border:1px solid #c4c4c4;line-height:27px;background:#efefef;">2-5</div>
<div class="c" style="left:391px;top:682px;width:109px;height:27px;border:1px solid #c4c4c4;line-height:27px;background:#efefef;"><span style="color:#0a7a0a;">荷尔斯泰因</span></div>
<div class="c" style="left:499px;top:682px;width:46px;height:27px;border:1px solid #c4c4c4;line-height:27px;background:#fdf9f5;">1.01</div>
<div class="c" style="left:544px;top:682px;width:99px;height:27px;border:1px solid #c4c4c4;line-height:27px;background:#fdf9f5;">半/一</div>
<div class="c" style="left:642px;top:682px;width:48px;height:27px;border:1px solid #c4c4c4;line-height:27px;background:#fdf9f5;">0.88</div>
<div class="c" style="left:689px;top:682px;width:59px;height:27px;border:1px solid #c4c4c4;line-height:27px;background:#f0f7fb;">1.89</div>
<div class="c" style="left:747px;top:682px;width:73px;height:27px;border:1px solid #c4c4c4;line-height:27px;background:#f0f7fb;">3.83</div>
<div class="c" style="left:819px;top:682px;width:75px;height:27px;border:1px solid #c4c4c4;line-height:27px;background:#f0f7fb;">3.79</div>
<div class="c" style="left:893px;top:682px;width:40px;height:27px;border:1px solid #c4c4c4;line-height:27px;background:#efefef;"><span style="color:#0a7a0a;">平</span></div>
<div class="c" style="left:932px;top:682px;width:40px;height:27px;border:1px solid #c4c4c4;line-height:27px;background:#efefef;"><span style="color:#c00;">赢</span></div>
<div class="c" style="left:971px;top:682px;width:61px;height:27px;border:1px solid #c4c4c4;line-height:27px;background:#efefef;"><span style="color:#c00;">大</span></div>
<div class="c" style="left:4px;top:708px;width:1028px;height:27px;border:1px solid #c4c4c4;line-height:27px;background:#fff;letter-spacing:0.23px">近<span style="color:#c00;">10</span>场,胜2平2负6, 胜率:<span style="color:#c00;">20%</span> 让胜率:<span style="color:#c00;">44.4%</span> 大率:<span style="color:#c00;">33.3%</span> 单率:<span style="color:#c00;">60%</span></div>
<div class="t" style="left:406px;top:387px;">近</div>
<div class="sel s10" style="left:422px;top:390px;width:38px;height:17px"><span class="st">10</span><svg class="chev" width="10" height="7" viewBox="0 0 10 7"><path d="M1 1.2 L5 5.2 L9 1.2" fill="none" stroke="#000" stroke-width="2"/></svg></div>
<div class="t" style="left:465px;top:387px;">场</div>
<div class="cbu" style="left:480px;top:390px"></div>
<div class="t" style="left:497px;top:387px;">同客</div>
<div class="cbc" style="left:525px;top:390px"><svg width="13" height="13" viewBox="0 0 13 13"><path d="M2.4 6.7 L5.2 9.4 L10.8 3.4" fill="none" stroke="#fff" stroke-width="2.1"/></svg></div>
<div class="t" style="left:538px;top:387px;">德甲</div>
<div class="cbc" style="left:562px;top:390px"><svg width="13" height="13" viewBox="0 0 13 13"><path d="M2.4 6.7 L5.2 9.4 L10.8 3.4" fill="none" stroke="#fff" stroke-width="2.1"/></svg></div>
<div class="t" style="left:575px;top:387px;">德国杯</div>
<div class="cbc" style="left:611px;top:390px"><svg width="13" height="13" viewBox="0 0 13 13"><path d="M2.4 6.7 L5.2 9.4 L10.8 3.4" fill="none" stroke="#fff" stroke-width="2.1"/></svg></div>
<div class="t" style="left:624px;top:387px;">球会友谊</div>
<div class="cbc" style="left:672px;top:390px"><svg width="13" height="13" viewBox="0 0 13 13"><path d="M2.4 6.7 L5.2 9.4 L10.8 3.4" fill="none" stroke="#fff" stroke-width="2.1"/></svg></div>
<div class="t" style="left:685px;top:387px;">德乙</div>
<div class="sel" style="left:535px;top:410px;width:60px;height:19px"><span class="st">Crow*</span><svg class="chev" width="10" height="7" viewBox="0 0 10 7"><path d="M1 1.2 L5 5.2 L9 1.2" fill="none" stroke="#000" stroke-width="2"/></svg></div>
<div class="sel" style="left:603px;top:410px;width:51px;height:19px"><span class="st">終指</span><svg class="chev" width="10" height="7" viewBox="0 0 10 7"><path d="M1 1.2 L5 5.2 L9 1.2" fill="none" stroke="#000" stroke-width="2"/></svg></div>
<div class="sel" style="left:727px;top:410px;width:69px;height:19px"><span class="st">平均值</span><svg class="chev" width="10" height="7" viewBox="0 0 10 7"><path d="M1 1.2 L5 5.2 L9 1.2" fill="none" stroke="#000" stroke-width="2"/></svg></div>
<div class="sel" style="left:804px;top:410px;width:51px;height:19px"><span class="st">終指</span><svg class="chev" width="10" height="7" viewBox="0 0 10 7"><path d="M1 1.2 L5 5.2 L9 1.2" fill="none" stroke="#000" stroke-width="2"/></svg></div>
<div class="sel" style="left:938px;top:410px;width:50px;height:19px"><span class="st">全场</span><svg class="chev" width="10" height="7" viewBox="0 0 10 7"><path d="M1 1.2 L5 5.2 L9 1.2" fill="none" stroke="#000" stroke-width="2"/></svg></div>
</body></html>
